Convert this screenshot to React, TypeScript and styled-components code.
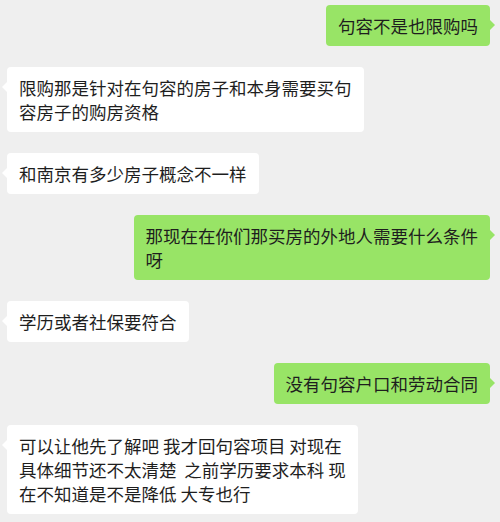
import React from "react";
import styled, { createGlobalStyle, css } from "styled-components";

const GlobalStyle = createGlobalStyle`
  html, body {
    margin: 0;
    padding: 0;
    background: #efefef;
  }
  body {
    font-family: "Noto Sans CJK SC", "Noto Sans", sans-serif;
  }
`;

const Chat = styled.div`
  width: 500px;
  height: 522px;
  box-sizing: border-box;
  padding: 5px 10px 0 7px;
  background: #efefef;
  display: flex;
  flex-direction: column;
  gap: 21px;
  overflow: hidden;
`;

const Row = styled.div<{ $mine: boolean }>`
  display: flex;
  justify-content: ${(p) => (p.$mine ? "flex-end" : "flex-start")};
`;

const Bubble = styled.div<{ $mine: boolean }>`
  position: relative;
  box-sizing: border-box;
  max-width: 360px;
  padding: 8.5px 12px;
  border-radius: 4px;
  font-size: 17.5px;
  line-height: 24px;
  color: #1e1e1e;
  white-space: pre;
  background: ${(p) => (p.$mine ? "#98e466" : "#ffffff")};

  &::before {
    content: "";
    position: absolute;
    top: 15px;
    width: 0;
    height: 0;
    border-top: 5px solid transparent;
    border-bottom: 5px solid transparent;
    ${(p) =>
      p.$mine
        ? css`
            right: -5px;
            border-left: 5px solid #98e466;
          `
        : css`
            left: -5px;
            border-right: 5px solid #ffffff;
          `}
  }
`;

type Msg = { mine: boolean; lines: string[] };

const messages: Msg[] = [
  { mine: true, lines: ["句容不是也限购吗"] },
  {
    mine: false,
    lines: ["限购那是针对在句容的房子和本身需要买句", "容房子的购房资格"],
  },
  { mine: false, lines: ["和南京有多少房子概念不一样"] },
  {
    mine: true,
    lines: ["那现在在你们那买房的外地人需要什么条件", "呀"],
  },
  { mine: false, lines: ["学历或者社保要符合"] },
  { mine: true, lines: ["没有句容户口和劳动合同"] },
  {
    mine: false,
    lines: [
      "可以让他先了解吧 我才回句容项目 对现在",
      "具体细节还不太清楚  之前学历要求本科 现",
      "在不知道是不是降低 大专也行",
    ],
  },
];

export default function App() {
  return (
    <>
      <GlobalStyle />
      <Chat>
        {messages.map((m, i) => (
          <Row key={i} $mine={m.mine}>
            <Bubble $mine={m.mine}>
              {m.lines.map((l, j) => (
                <React.Fragment key={j}>
                  {j > 0 && <br />}
                  {l}
                </React.Fragment>
              ))}
            </Bubble>
          </Row>
        ))}
      </Chat>
    </>
  );
}
